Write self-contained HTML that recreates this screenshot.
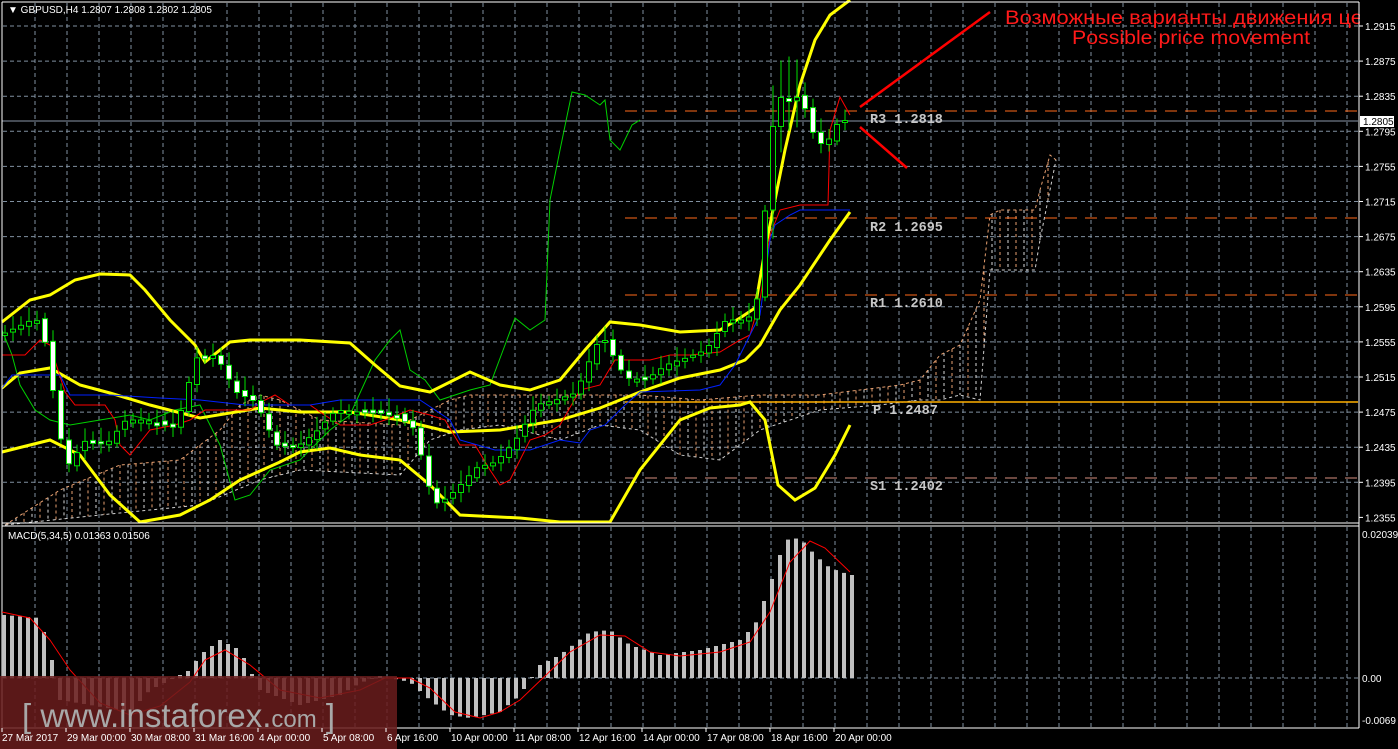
<!DOCTYPE html>
<html><head><meta charset="utf-8"><style>
html,body{margin:0;padding:0;background:#000;width:1398px;height:749px;overflow:hidden}
svg{display:block}
text{font-family:"Liberation Sans",sans-serif}
.mono{font-family:"Liberation Mono",monospace}
</style></head><body>
<svg id="s" width="1398" height="749" xmlns="http://www.w3.org/2000/svg">
<rect width="1398" height="749" fill="#000"/>
<g id="grid" stroke="#8090a0" stroke-width="1" stroke-dasharray="4,3"></g>
<g id="cloud" stroke-width="1" stroke-dasharray="3,3"></g>
<g stroke="#ff6a1a" stroke-width="1" stroke-dasharray="12,8">
<line x1="625" y1="111" x2="1358" y2="111"/>
<line x1="625" y1="218" x2="1358" y2="218"/>
<line x1="625" y1="295" x2="1358" y2="295"/>
</g>
<line x1="625" y1="478" x2="1358" y2="478" stroke="#d89080" stroke-dasharray="12,8"/>
<line x1="625" y1="402" x2="1358" y2="402" stroke="#ffb000" stroke-width="1.5"/>
<line x1="2" y1="121" x2="1358" y2="121" stroke="#8a96a8"/>
<g fill="#c8c8c8" class="mono" font-size="13.5" font-weight="bold">
<text class="mono" x="870" y="123">R3 1.2818</text>
<text class="mono" x="870" y="231">R2 1.2695</text>
<text class="mono" x="870" y="307">R1 1.2610</text>
<text class="mono" x="873" y="414">P 1.2487</text>
<text class="mono" x="870" y="490">S1 1.2402</text>
</g>
<polyline fill="none" stroke="#00d000" stroke-width="1" points="2,330 12,355 20,385 35,410 50,420 70,425 100,420 130,415 150,420 175,410 200,405 220,445 235,500 250,495 270,470 300,460 330,430 350,415 375,360 390,340 400,330 410,370 425,380 440,400 470,390 490,385 505,345 515,318 530,330 545,320 550,200 560,150 572,92 585,95 600,105 605,100 610,140 620,150 632,125 640,120"/>
<g fill="none" stroke="#ffff00" stroke-width="3">
<polyline points="2,322 30,300 50,295 75,280 100,274 130,275 145,290 170,320 195,345 205,362 230,342 250,340 300,340 350,343 375,365 400,386 430,392 470,372 500,385 530,390 560,380 585,350 610,322 640,325 680,332 720,330 740,318 755,308 765,250 785,150 800,85 815,40 830,15 850,0"/>
<polyline points="2,388 20,373 50,368 80,385 110,393 150,405 200,418 260,408 300,412 350,412 400,420 450,432 500,430 560,420 600,408 640,392 680,378 720,370 745,360 760,345 780,310 800,285 830,240 850,212"/>
<polyline points="2,452 30,445 50,440 80,455 110,495 140,522 180,515 210,500 240,480 280,462 300,452 330,448 360,455 400,460 430,485 460,515 520,518 560,522 610,522 640,470 680,420 710,408 740,405 750,402 765,420 778,485 795,500 815,488 835,455 850,425"/>
</g>
<polyline fill="none" stroke="#ff0000" stroke-width="1" points="2,355 25,355 40,340 50,345 65,392 75,405 105,405 115,420 120,445 130,455 150,430 175,425 190,420 205,410 225,410 250,410 265,400 275,395 290,405 310,405 320,412 340,425 370,425 385,420 410,410 430,415 445,420 460,445 475,445 490,470 500,485 510,480 520,460 530,440 545,435 560,425 580,390 600,385 615,360 630,360 650,360 670,355 690,355 720,352 740,340 750,335 760,300 770,235 780,210 800,205 812,205 828,205 830,130 840,97 850,115"/>
<polyline fill="none" stroke="#0020ff" stroke-width="1" points="2,388 12,375 40,375 60,375 70,395 110,395 160,398 200,400 245,405 280,405 310,405 340,400 380,400 420,400 450,420 460,440 495,450 530,450 560,440 580,443 590,430 605,425 625,405 640,392 700,390 720,385 735,365 745,345 760,315 770,240 775,225 790,215 800,210 850,210"/>
<g id="candles"></g>
<g stroke="#ff0000" stroke-width="2.5">
<line x1="860" y1="107" x2="990" y2="12"/>
<line x1="860" y1="127" x2="907" y2="168"/>
</g>
<g fill="#ff1a1a" font-size="19">
<text x="1005" y="24" textLength="370" lengthAdjust="spacingAndGlyphs">Возможные варианты движения цен</text>
<text x="1072" y="44" textLength="238" lengthAdjust="spacingAndGlyphs">Possible price movement</text>
</g>
<rect x="1360" y="0" width="38" height="749" fill="#000"/>
<line x1="2" y1="2" x2="1359" y2="2" stroke="#fff"/>
<line x1="2" y1="2" x2="2" y2="728" stroke="#fff"/>
<line x1="1359" y1="2" x2="1359" y2="728" stroke="#fff"/>
<line x1="2" y1="523" x2="1359" y2="523" stroke="#fff"/>
<line x1="2" y1="526" x2="1359" y2="526" stroke="#fff"/>
<line x1="2" y1="728" x2="1359" y2="728" stroke="#fff"/>
<g id="hist" fill="#c0c0c0"></g>
<polyline fill="none" stroke="#ff0000" stroke-width="1" points="2,612 30,618 50,640 70,670 100,703 130,715 160,706 190,682 205,660 225,650 250,665 280,690 320,698 360,690 385,678 410,678 430,688 455,712 480,718 500,712 520,700 545,676 570,652 600,635 625,636 650,652 680,656 720,652 750,642 770,612 790,562 810,541 825,548 850,572"/>
<text x="8" y="539" fill="#fff" font-size="10">MACD(5,34,5) 0.01363 0.01506</text>
<g fill="#fff" font-size="10"><text x="8" y="13">▼ GBPUSD,H4  1.2807 1.2808 1.2802 1.2805</text></g>
<rect x="0" y="676" width="397" height="73" fill="#6a1c1c" opacity="0.85"/>
<text x="22" y="727" fill="#a8a8a8" font-size="33">[ www.instaforex.<tspan font-size="24">com</tspan> ]</text>
<g id="axis" fill="#fff" font-size="10"></g>
<rect x="1360" y="116" width="34" height="11" fill="#fff"/>
<text x="1363" y="125" fill="#000" font-size="10">1.2805</text>
</svg>
<script>
(function(){
var NS="http://www.w3.org/2000/svg";
function el(p,t,a){var e=document.createElementNS(NS,t);for(var k in a)e.setAttribute(k,a[k]);p.appendChild(e);return e;}
var g=document.getElementById('grid');
for(var x=35;x<1358;x+=32){el(g,'line',{x1:x,y1:3,x2:x,y2:522});el(g,'line',{x1:x,y1:527,x2:x,y2:727});}
var ax=document.getElementById('axis');
var prices=["1.2915","1.2875","1.2835","1.2795","1.2755","1.2715","1.2675","1.2635","1.2595","1.2555","1.2515","1.2475","1.2435","1.2395","1.2355"];
for(var i=0;i<15;i++){var y=26+i*35.1;if(i<14)el(g,'line',{x1:3,y1:y,x2:1358,y2:y});el(ax,'line',{x1:1359,y1:y,x2:1363,y2:y,stroke:'#fff'});var t=el(ax,'text',{x:1365,y:y+4});t.textContent=prices[i];}
el(g,'line',{x1:3,y1:678,x2:1358,y2:678});
[["0.02039",538],["0.00",682],["-0.0069",724]].forEach(function(a){var t=el(ax,'text',{x:1362,y:a[1]});t.textContent=a[0];});
var labs=["27 Mar 2017","29 Mar 00:00","30 Mar 08:00","31 Mar 16:00","4 Apr 00:00","5 Apr 08:00","6 Apr 16:00","10 Apr 00:00","11 Apr 08:00","12 Apr 16:00","14 Apr 00:00","17 Apr 08:00","18 Apr 16:00","20 Apr 00:00"];
labs.forEach(function(l,i){var x=2+i*64;var t=el(ax,'text',{x:x+(i?1:0),y:741});t.textContent=l;el(ax,'line',{x1:x,y1:728,x2:x,y2:732,stroke:'#fff'});});
var kp=[[5,335],[40,318],[50,345],[60,410],[70,468],[90,440],[110,445],[130,420],[150,420],[180,428],[200,358],[220,355],[240,392],[260,402],[280,445],[300,448],[320,432],[340,410],[360,412],[380,410],[400,415],[420,430],[430,480],[442,505],[460,490],[480,468],[500,462],[520,440],[540,405],[560,400],[580,393],[600,345],[610,340],[620,362],[630,378],[650,380],[670,365],[690,358],[710,350],[730,320],[750,320],[760,310],[770,200],[780,95],[790,100],[800,96],[810,110],[820,142],[830,145],[840,125],[850,120]];
function py(x){for(var i=1;i<kp.length;i++)if(x<=kp[i][0]){var a=kp[i-1],b=kp[i];return a[1]+(b[1]-a[1])*(x-a[0])/(b[0]-a[0]);}return 120;}
var cg=document.getElementById('candles');var prev=py(0);
for(var x=5;x<=850;x+=8){var c=py(x+4),o=prev+((x*7)%5-2);var tp=Math.min(o,c),bt=Math.max(o,c);if(bt-tp<2)bt=tp+3;
var w=6+((x*13)%9)+(x>770&&x<800?30:0);
el(cg,'line',{x1:x,y1:tp-w,x2:x,y2:bt+w*0.7,stroke:'#00e000'});
el(cg,'rect',{x:x-2.5,y:tp,width:5,height:bt-tp,fill:(c>o?'#fff':'#000'),stroke:'#00e000'});prev=c;}
var cl=document.getElementById('cloud');
var up=[[5,525],[60,490],[120,465],[180,460],[220,430],[240,405],[260,395],[280,400],[320,420],[400,425],[450,400],[470,395],[520,395],[600,395],[640,395],[700,400],[760,395],[820,395],[860,390],[900,385],[920,380],[940,355],[960,345],[980,300],[990,215],[1000,210],[1035,210],[1040,190],[1050,155],[1056,160]];
var lo=[[5,525],[100,515],[200,505],[260,480],[300,470],[400,475],[430,440],[460,430],[500,425],[560,440],[600,425],[640,430],[680,455],[720,460],[760,430],[820,410],[880,405],[920,400],[940,400],[960,395],[980,400],[990,270],[1035,270],[1040,240],[1056,160]];
function iy(a,x){for(var i=1;i<a.length;i++)if(x<=a[i][0]){var p=a[i-1],q=a[i];return p[1]+(q[1]-p[1])*(x-p[0])/(q[0]-p[0]);}return a[a.length-1][1];}
for(var x=8;x<=1056;x+=8){var a=iy(up,x),b=iy(lo,x);el(cl,'line',{x1:x,y1:Math.min(a,b),x2:x,y2:Math.max(a,b),stroke:(x%16?'#e8a070':'#d8d8d8')});}
el(cl,'polyline',{points:up.map(function(p){return p.join(',')}).join(' '),fill:'none',stroke:'#e8a070'});
el(cl,'polyline',{points:lo.map(function(p){return p.join(',')}).join(' '),fill:'none',stroke:'#d0d0d0'});
var hk=[[4,615],[40,618],[52,660],[60,700],[90,705],[130,712],[150,690],[170,680],[190,670],[200,655],[220,640],[240,650],[260,690],[300,705],[340,695],[360,683],[380,676],[410,682],[430,700],[450,715],[470,718],[500,712],[520,695],[540,665],[560,655],[590,632],[610,630],[630,645],[660,655],[700,650],[740,640],[755,625],[770,585],[785,540],[800,538],[815,555],[830,568],[850,575]];
var hg=document.getElementById('hist');
for(var x=4;x<=852;x+=8){var y=iy(hk,x);el(hg,'rect',{x:x-2,y:Math.min(y,678),width:4,height:Math.abs(678-y)||1});}
})();
</script>
</body></html>
